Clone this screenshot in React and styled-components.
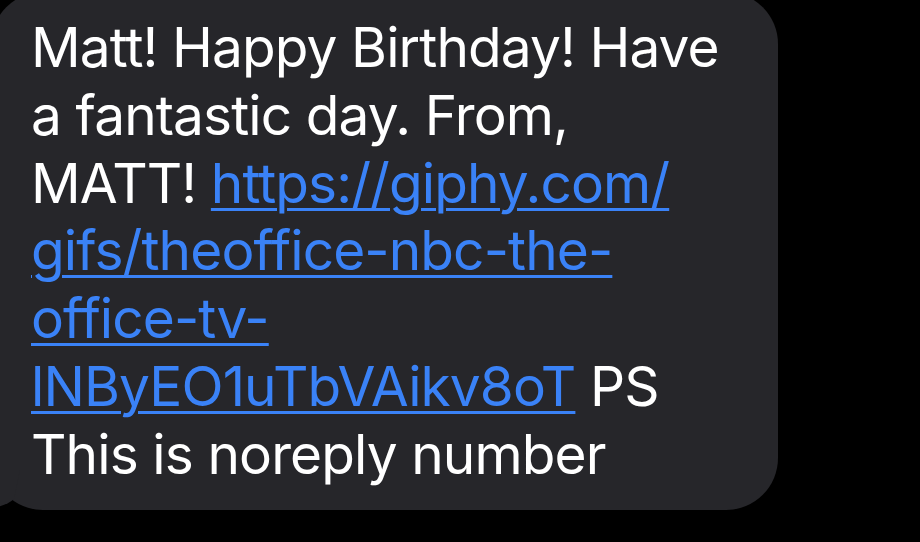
import React from "react";
import styled, { createGlobalStyle } from "styled-components";

const Global = createGlobalStyle`
  html, body { margin: 0; padding: 0; background: #000; overflow: hidden; }
  body { width: 920px; height: 542px; }
`;

const Page = styled.div`
  width: 920px;
  height: 542px;
  background: #000;
  overflow: hidden;
`;

const Bubble = styled.div`
  position: relative;
  box-sizing: border-box;
  width: 787px;
  height: 518px;
  margin: -8px 0 0 -9px;
  padding: 22px 0 0 40px;
  background: #26262a;
  border-radius: 52px;
`;

const Tail = styled.svg`
  position: absolute;
  left: 0;
  bottom: 0;
  width: 40px;
  height: 40px;
`;

const Text = styled.div`
  font-family: Inter, "Noto Sans", sans-serif;
  font-size: 55px;
  line-height: 67.8px;
  color: #fff;
  letter-spacing: -0.9px;
  white-space: nowrap;
`;

const Line = styled.div``;

const Link = styled.a`
  color: #3a82f7;
  text-decoration: underline;
  text-decoration-thickness: 3px;
  text-underline-offset: 5px;
`;

export default function App() {
  return (
    <Page>
      <Global />
      <Bubble>
        <Tail viewBox="0 0 40 40">
          <path d="M0 0 H29 L23 29 Q15 36 0 38 Z" fill="#26262a" />
        </Tail>
        <Text>
          <Line>Matt! Happy Birthday! Have</Line>
          <Line>a fantastic day. From,</Line>
          <Line>
            MATT! <Link href="#">https://giphy.com/</Link>
          </Line>
          <Line>
            <Link href="#">gifs/theoffice-nbc-the-</Link>
          </Line>
          <Line>
            <Link href="#">office-tv-</Link>
          </Line>
          <Line>
            <Link href="#">lNByEO1uTbVAikv8oT</Link> PS
          </Line>
          <Line>This is noreply number</Line>
        </Text>
      </Bubble>
    </Page>
  );
}
